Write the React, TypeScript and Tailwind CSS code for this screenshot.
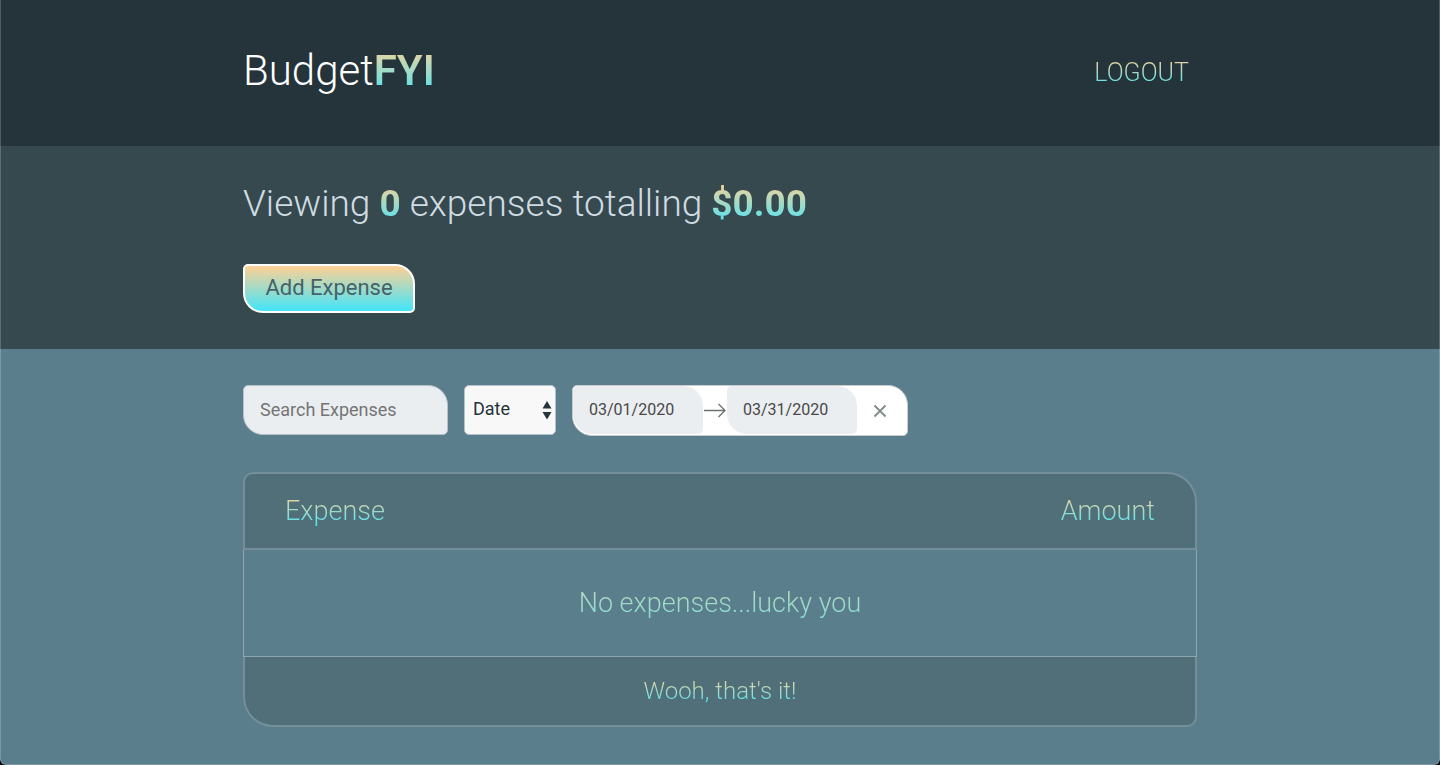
import { useState } from "react";

const gradientText =
  "inline-block bg-linear-to-b/srgb from-[#ffd194] to-[#42e5fa] bg-clip-text text-transparent";

function Header() {
  return (
    <header className="bg-[#25333a]">
      <div className="mx-auto flex h-[146px] max-w-[954px] items-center justify-between pb-1">
        <h1 className="text-[42px] leading-[56px] font-light text-white">
          Budget<span className={`${gradientText} leading-[52px] font-semibold`}>FYI</span>
        </h1>
        <button type="button" className={`${gradientText} mt-1 mr-2 text-[25px] leading-8 font-light`}>
          LOGOUT
        </button>
      </div>
    </header>
  );
}

function Summary() {
  return (
    <section className="bg-[#35494f]">
      <div className="mx-auto flex h-[203px] max-w-[954px] flex-col items-start pt-8">
        <h2 className="text-[37px] leading-[52px] font-light text-[#d0dbe2]">
          Viewing <span className={`${gradientText} leading-[44px] font-bold`}>0</span> expenses totalling{" "}
          <span className={`${gradientText} leading-[44px] font-bold`}>$0.00</span>
        </h2>
        <button
          type="button"
          className="mt-[34px] h-[49px] w-[172px] rounded-tl-[5px] rounded-tr-[20px] rounded-br-[5px] rounded-bl-[20px] border-2 border-white bg-linear-to-b/srgb from-[#ffd194] to-[#42e5fa] pb-0.5 text-[22px] font-normal text-[#46616b]"
        >
          Add Expense
        </button>
      </div>
    </section>
  );
}

function DateRange() {
  const [start, setStart] = useState("03/01/2020");
  const [end, setEnd] = useState("03/31/2020");
  const field =
    "h-12 w-[130px] rounded-tl-[5px] rounded-tr-[20px] rounded-br-[5px] rounded-bl-[20px] bg-[#ebeef1] pl-4 pb-0.5 text-base font-normal text-[#484848] outline-none";

  return (
    <div className="flex h-[51px] w-[336px] items-start rounded-tl-[5px] rounded-tr-[20px] rounded-br-[5px] rounded-bl-[20px] border border-[#cacccd] bg-white">
      <input aria-label="Start Date" className={field} value={start} onChange={(e) => setStart(e.target.value)} />
      <svg className="h-12 w-6 shrink-0" viewBox="0 0 24 48" fill="none" stroke="#6b6f70" strokeWidth="1.3" aria-hidden="true">
        <path d="M1 24.500h21M15.500 18l6.500 6.500-6.500 6.500" />
      </svg>
      <input aria-label="End Date" className={field} value={end} onChange={(e) => setEnd(e.target.value)} />
      <button
        type="button"
        aria-label="Clear Dates"
        className="flex h-[49px] flex-1 items-center justify-center pr-1"
        onClick={() => {
          setStart("");
          setEnd("");
        }}
      >
        <svg className="h-4 w-4" viewBox="0 0 16 16" fill="none" stroke="#82888a" strokeWidth="1.8" aria-hidden="true">
          <path d="M2.500 2.500l11 11M13.500 2.500l-11 11" />
        </svg>
      </button>
    </div>
  );
}

function Filters() {
  return (
    <div className="flex flex-wrap items-start gap-4">
      <input
        type="text"
        aria-label="Search Expenses"
        placeholder="Search Expenses"
        className="h-[50px] w-[205px] rounded-tl-[5px] rounded-tr-[20px] rounded-br-[5px] rounded-bl-[20px] border border-[#b6c3cc] bg-[#ebeef1] px-4 pb-0.5 text-lg font-normal text-[#25333a] outline-none placeholder:text-[#757575]"
      />
      <div className="relative">
        <select
          aria-label="Sort by"
          className="h-[50px] w-[92px] appearance-none rounded-[5px] border border-[#b6c3cc] bg-[#f8f8f8] pb-0.5 pl-2 text-lg font-normal text-[#25333a] outline-none"
        >
          <option>Date</option>
          <option>Amount</option>
        </select>
        <svg
          className="pointer-events-none absolute top-4 right-1 h-[19px] w-[10px]"
          viewBox="0 0 10 19"
          fill="#25333a"
          aria-hidden="true"
        >
          <path d="M5 0l4.500 7.500h-9zM.5 11h9L5 18.500z" />
        </svg>
      </div>
      <DateRange />
    </div>
  );
}

function ExpenseTable() {
  return (
    <table className="mt-9 w-full border-separate border-spacing-0 text-[27px] leading-10 font-light">
      <thead>
        <tr>
          <th className="h-[78px] rounded-tl-[10px] border-y-2 border-l-2 border-[#748f99] bg-[#506f79] px-10 py-0 text-left font-light">
            <span className={`${gradientText} leading-8`}>Expense</span>
          </th>
          <th className="h-[78px] rounded-tr-[30px] border-y-2 border-r-2 border-[#748f99] bg-[#506f79] px-10 py-0 text-right font-light">
            <span className={`${gradientText} leading-8`}>Amount</span>
          </th>
        </tr>
      </thead>
      <tbody>
        <tr>
          <td colSpan={2} className="h-[106px] border-x border-[#90a7b2] p-0 text-center">
            <p className="bg-linear-to-b/srgb from-[#ffd194] to-[#42e5fa] bg-clip-text py-[33px] text-transparent">
              No expenses...lucky you
            </p>
          </td>
        </tr>
      </tbody>
      <tfoot>
        <tr>
          <td colSpan={2} className="h-px bg-[#90a7b2] p-0" />
        </tr>
        <tr>
          <td
            colSpan={2}
            className="h-[70px] rounded-br-[10px] rounded-bl-[30px] border-x-2 border-b-2 border-[#748f99] bg-[#506f79] p-0 text-center text-2xl leading-8"
          >
            <span className={`${gradientText} leading-7`}>Wooh, that's it!</span>
          </td>
        </tr>
      </tfoot>
    </table>
  );
}

export default function App() {
  return (
    <div className="min-h-screen bg-black font-[Roboto,sans-serif]">
      <div className="relative flex min-h-screen flex-col overflow-hidden rounded-b-[6px] bg-[#5b7e8d]">
        <Header />
        <Summary />
        <main className="mx-auto w-full max-w-[954px] pt-9 pb-[38px]">
          <Filters />
          <ExpenseTable />
        </main>
        <div className="pointer-events-none absolute inset-0 rounded-b-[6px] border-x border-b border-white/20" />
      </div>
    </div>
  );
}
